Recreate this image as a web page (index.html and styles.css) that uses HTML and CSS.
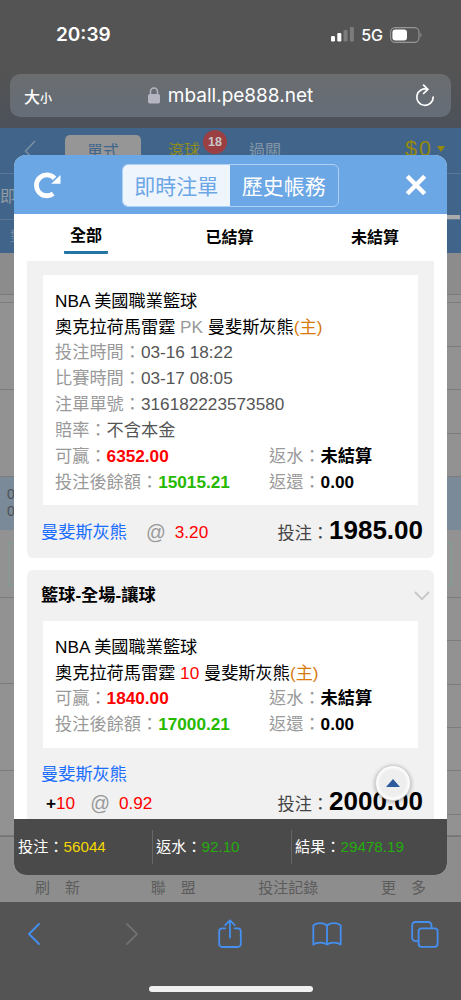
FILE: index.html
```html
<!DOCTYPE html>
<html lang="zh-Hant">
  <head>
    <meta charset="UTF-8" />
    <meta name="viewport" content="width=device-width, initial-scale=1" />
    <title>即時注單</title>
    <link rel="stylesheet" href="styles.css">
  </head>
  <body>
    <div class="phone">
      <header class="browser-top">
        <div class="status">
          <span class="time">20:39</span>
          <div class="status-icons">
            <svg width="23" height="15" viewBox="0 0 23 15">
              <rect x="0" y="9" width="4" height="5.5" rx="1.2" fill="#fff" />
              <rect x="6.3" y="6" width="4" height="8.5" rx="1.2" fill="#fff" />
              <rect x="12.6" y="3" width="4" height="11.5" rx="1.2" fill="#7c7c7c" />
              <rect x="18.9" y="0" width="4" height="14.5" rx="1.2" fill="#7c7c7c" />
            </svg>
            <span class="net">5G</span>
            <svg width="33" height="16" viewBox="0 0 33 16">
              <rect x="0.6" y="0.6" width="28.4" height="14.8" rx="4.6" fill="none" stroke="#979797" stroke-width="1.1" />
              <rect x="2.4" y="2.4" width="14.6" height="11.2" rx="3" fill="#fff" />
              <path d="M30.5 5.5q2 2.5 0 5z" fill="#979797" />
            </svg>
          </div>
        </div>
        <div class="address">
          <span class="size">大<small>小</small></span>
          <div class="url">
            <svg width="12" height="17" viewBox="0 0 12 17">
              <rect x="0" y="7" width="12" height="9.5" rx="1.8" fill="#b4b5c0" />
              <path d="M2.5 8V4.6a3.5 3.5 0 0 1 7 0V8" fill="none" stroke="#b4b5c0" stroke-width="1.5" />
            </svg>
            <span>mball.pe888.net</span>
          </div>
          <svg width="20" height="23" viewBox="0 0 20 23" fill="none" stroke="#fff" stroke-width="1.7" stroke-linecap="round" stroke-linejoin="round">
            <path d="M12.6 5.3A8.2 8.2 0 1 0 18.2 13" />
            <path d="M8.6 1.2l4.2 4.1-4.2 4.2" />
          </svg>
        </div>
      </header>

      <main class="page">
        <nav class="topnav">
          <svg class="back" width="12" height="22" viewBox="0 0 12 22"><path d="M11 1L1.5 11 11 21" fill="none" stroke="#8193a7" stroke-width="1.3" /></svg>
          <span class="nav-active">單式</span>
          <span class="nav-live">滾球<b class="badge">18</b></span>
          <span class="nav-parlay">過關</span>
          <span class="money">$0<i class="caret"></i></span>
        </nav>
        <div class="subnav"><span>即</span></div>
        <div class="filter"><span>對</span><i></i></div>
        <div class="blank"></div>
        <div class="strip"></div>
        <div class="board">
          <div class="side">
            <div class="cell h87"></div>
            <div class="cell h87"></div>
            <div class="cell odds">0<br />0</div>
            <div class="cell h68"><div class="box"></div></div>
            <div class="cell h86"></div>
            <div class="cell h87"></div>
            <div class="cell rest"></div>
          </div>
          <div class="side right">
            <div class="cell h44"></div>
            <div class="cell h43"></div>
            <div class="cell h44"></div>
            <div class="cell h43"></div>
            <div class="cell odds"></div>
            <div class="cell h68"><div class="box"></div></div>
            <div class="cell h43"></div>
            <div class="cell h44"></div>
            <div class="cell h43"></div>
            <div class="cell h43"></div>
            <div class="cell h44"></div>
            <div class="cell rest"></div>
          </div>
        </div>
        <div class="footnav">
          <span>刷　新</span>
          <span class="league">聯　盟</span>
          <span>投注記錄</span>
          <span>更　多</span>
        </div>

        <section class="modal">
          <div class="modal-head">
            <svg class="reload" width="27" height="28" viewBox="0 0 27 28">
              <path d="M20.6 7.4A10.400 10.400 0 1 0 19.200 22.600" fill="none" stroke="#fff" stroke-width="4.800" />
              <path d="M26.500 4V12.800H17.200z" fill="#fff" />
            </svg>
            <div class="switch">
              <span class="on">即時注單</span>
              <span>歷史帳務</span>
            </div>
            <svg width="22" height="22" viewBox="0 0 22 22"><path d="M2.3 2.3l17.4 17.4M19.7 2.3L2.3 19.7" stroke="#fff" stroke-width="4.4" /></svg>
          </div>

          <div class="tabs">
            <span class="tab active">全部</span>
            <span class="tab">已結算</span>
            <span class="tab">未結算</span>
          </div>

          <div class="list">
            <article class="card first">
              <div class="detail">
                <div>NBA 美國職業籃球</div>
                <div>奧克拉荷馬雷霆 <span class="gray">PK</span> 曼斐斯灰熊<span class="host">(主)</span></div>
                <div><label>投注時間：</label><span class="dark">03-16 18:22</span></div>
                <div><label>比賽時間：</label><span class="dark">03-17 08:05</span></div>
                <div><label>注單單號：</label><span class="dark">316182223573580</span></div>
                <div><label>賠率：</label><span class="dark">不含本金</span></div>
                <div class="pair">
                  <span><label>可贏：</label><b class="red">6352.00</b></span>
                  <span><label>返水：</label><b>未結算</b></span>
                </div>
                <div class="pair">
                  <span><label>投注後餘額：</label><b class="green">15015.21</b></span>
                  <span><label>返還：</label><b>0.00</b></span>
                </div>
              </div>
              <div class="bet">
                <span class="team">曼斐斯灰熊</span>
                <span class="at">@</span>
                <span class="red">3.20</span>
                <span class="stake">投注：<b>1985.00</b></span>
              </div>
            </article>

            <article class="card last">
              <div class="card-title">
                <span>籃球-全場-讓球</span>
                <svg width="16" height="10" viewBox="0 0 16 10"><path d="M1 1l7 7.2L15 1" fill="none" stroke="#c8c8c8" stroke-width="1.8" /></svg>
              </div>
              <div class="detail short">
                <div>NBA 美國職業籃球</div>
                <div>奧克拉荷馬雷霆 <span class="red">10</span> 曼斐斯灰熊<span class="host">(主)</span></div>
                <div class="pair">
                  <span><label>可贏：</label><b class="red">1840.00</b></span>
                  <span><label>返水：</label><b>未結算</b></span>
                </div>
                <div class="pair">
                  <span><label>投注後餘額：</label><b class="green">17000.21</b></span>
                  <span><label>返還：</label><b>0.00</b></span>
                </div>
              </div>
              <div class="pick team">曼斐斯灰熊</div>
              <div class="bet second">
                <span class="point"><b>+</b><span class="red">10</span></span>
                <span class="at">@</span>
                <span class="red">0.92</span>
                <span class="stake">投注：<b>2000.00</b></span>
              </div>
            </article>
            <div class="to-top">
              <svg width="14" height="8" viewBox="0 0 14 8"><path d="M0 8L7 0l7 8z" fill="#2c5a9c" /></svg>
            </div>
          </div>

          <div class="summary">
            <span>投注：<em class="yellow">56044</em></span>
            <span>返水：<em>92.10</em></span>
            <span>結果：<em>29478.19</em></span>
          </div>
        </section>
      </main>

      <footer class="browser-bottom">
        <div class="tools">
          <svg width="13" height="22" viewBox="0 0 13 22"><path d="M11.5 1L1.5 11l10 10" /></svg>
          <svg class="off" width="13" height="22" viewBox="0 0 13 22"><path d="M1.5 1l10 10-10 10" /></svg>
          <svg width="24" height="30" viewBox="0 0 24 30">
            <path d="M7.3 9.3H4.2A3 3 0 0 0 1.2 12.3V25a3 3 0 0 0 3 3h15.6a3 3 0 0 0 3-3V12.3a3 3 0 0 0-3-3H16.700" />
            <path d="M12 18.500V1.500M7.200 6.200L12 1.300l4.800 4.900" />
          </svg>
          <svg width="30" height="24" viewBox="0 0 30 24">
            <path d="M15 3.600C12 .5 4.500.3 1.300 3.600V22.500C4.500 20 12 20 15 22.500 18 20 25.500 20 28.700 22.500V3.600C25.500.3 18 .5 15 3.600zM15 3.600V22.500" />
          </svg>
          <svg width="28" height="27" viewBox="0 0 28 27">
            <rect x="7.600" y="7.300" width="19" height="18.500" rx="3" />
            <path d="M7.600 20.200H4.500a3.300 3.300 0 0 1-3.300-3.300V4.300A3.300 3.300 0 0 1 4.500 1h12.700a3.300 3.300 0 0 1 3.300 3.300v3" />
          </svg>
        </div>
        <div class="home-bar"></div>
      </footer>
    </div>
  </body>
</html>
```
FILE: styles.css
```css
* {
  box-sizing: border-box;
}

body {
  margin: 0;
  font-family: "Liberation Sans", "Noto Sans CJK TC", sans-serif;
  background: #545454;
}

svg {
  display: block;
  flex: none;
}

.phone {
  width: 461px;
  height: 1000px;
  overflow: hidden;
  display: flex;
  flex-direction: column;
}

/* browser chrome */
.browser-top {
  height: 128px;
  flex: none;
  background: linear-gradient(#545454 55%, #4c515a);
  color: #fff;
  font-family: Inter, "Noto Sans CJK TC", sans-serif;
}

.status {
  height: 74px;
  padding: 21px 38px 0 56px;
  display: flex;
  justify-content: space-between;
  align-items: flex-start;
}

.time {
  font-size: 19px;
  font-weight: 600;
  line-height: 28px;
}

.status-icons {
  display: flex;
  align-items: center;
  height: 27px;
  gap: 7px;
}

.net {
  font-size: 16px;
  font-weight: 500;
}

.address {
  height: 43px;
  margin: 0 10px;
  padding: 0 16px 0 14px;
  border-radius: 10px;
  background: linear-gradient(#6b6d6f, #656d78);
  display: flex;
  align-items: center;
  justify-content: space-between;
}

.size {
  font-size: 16px;
  font-weight: 500;
}

.size small {
  font-size: 12px;
}

.url {
  display: flex;
  align-items: center;
  gap: 8px;
  font-size: 19px;
  margin-left: -6px;
}

.browser-bottom {
  height: 98px;
  flex: none;
  background: #545454;
  display: flex;
  flex-direction: column;
  align-items: center;
}

.tools {
  width: 100%;
  height: 64px;
  padding: 0 21px 0 19px;
  display: flex;
  align-items: center;
  justify-content: space-between;
}

.tools svg {
  width: 30px;
  fill: none;
  stroke: #458ff0;
  stroke-width: 1.8;
  stroke-linecap: round;
  stroke-linejoin: round;
}

.tools .off {
  stroke: #707070;
}

.home-bar {
  width: 164px;
  height: 6px;
  margin-top: 20px;
  border-radius: 3px;
  background: #f0f0f0;
}

/* dimmed page */
.page {
  position: relative;
  height: 774px;
  flex: none;
  background: #929292;
  display: flex;
  flex-direction: column;
}

.topnav {
  height: 46px;
  flex: none;
  background: #41658a;
  border-bottom: 1px solid #5c7695;
  display: flex;
  align-items: flex-start;
  font-size: 16px;
  color: #8395a8;
}

.back {
  margin: 12px 0 0 24px;
}

.nav-active {
  width: 76px;
  height: 36px;
  margin: 7px 0 0 29px;
  border-radius: 5px;
  background: #969696;
  color: #41658a;
  text-align: center;
  line-height: 33px;
}

.nav-live {
  position: relative;
  margin-left: 27px;
  line-height: 46px;
  color: #8e8b1c;
}

.badge {
  position: absolute;
  left: 35px;
  top: 2px;
  width: 24px;
  height: 24px;
  border-radius: 50%;
  background: #9c3f42;
  color: #c8c8c8;
  font-size: 12.5px;
  line-height: 25px;
  text-align: center;
}

.nav-parlay {
  margin-left: 49px;
  line-height: 46px;
}

.money {
  margin: 0 16px 0 auto;
  font-size: 21.5px;
  line-height: 43px;
  letter-spacing: 2px;
  color: #95880d;
}

.caret {
  display: inline-block;
  margin-left: 4px;
  vertical-align: 4px;
  border: 4.5px solid transparent;
  border-top: 6px solid #95880d;
  border-bottom: 0;
}

.subnav {
  height: 46px;
  flex: none;
  background: #41658a;
  border-bottom: 1px solid #5c7695;
  color: #929ba5;
  font-size: 16px;
  line-height: 46px;
}

.filter {
  height: 33px;
  flex: none;
  background: #41658a;
  color: #71879f;
  display: flex;
  justify-content: space-between;
  font-size: 14px;
  line-height: 32px;
  padding: 0 1px 0 10px;
}

.filter i {
  width: 100px;
  height: 4px;
  margin-top: -5px;
  background: #aaa;
}

.blank {
  height: 42px;
  flex: none;
  background: #8c8c8c;
  border-bottom: 1px solid #7a7a7a;
}

.strip {
  height: 8px;
  flex: none;
  border-bottom: 1px solid #7d7d7d;
}

.board {
  flex: 1;
  min-height: 0;
  display: flex;
  justify-content: space-between;
}

.side {
  width: 50%;
  display: flex;
  flex-direction: column;
}

.cell {
  flex: none;
  border-bottom: 1px solid #7c7c7c;
}

.h43 { height: 43px; }
.h44 { height: 44px; }
.h68 { height: 68px; padding-top: 12px; }
.h86 { height: 86px; }
.h87 { height: 87px; }

.odds {
  height: 53px;
  border: 0;
  background: #7b8a99;
  color: #4b4f53;
  font-size: 14px;
  line-height: 17px;
  padding: 9px 0 0 7px;
}

.rest {
  flex: 1;
}

.box {
  height: 44px;
  margin-left: 9px;
  border: 1px solid #7da092;
}

.right .box {
  margin: 0 9px 0 0;
}

.footnav {
  height: 66px;
  flex: none;
  background: #8d8d8d;
  border-top: 1px solid #747474;
  padding: 40px 35px 0 35px;
  display: flex;
  justify-content: space-between;
  font-size: 15px;
  line-height: 22px;
  color: #5c5c5c;
}

.league {
  margin-left: 8px;
}

/* bet records */
.modal {
  position: absolute;
  left: 14px;
  top: 27px;
  width: 433px;
  height: 720px;
  border-radius: 12px;
  overflow: hidden;
  background: #fff;
  display: flex;
  flex-direction: column;
}

.modal-head {
  height: 59px;
  flex: none;
  padding: 0 20px;
  background: #6ba6e5;
  display: flex;
  align-items: center;
  justify-content: space-between;
}

.switch {
  width: 217px;
  height: 43px;
  margin: 2px 0 0 -6px;
  border: 1px solid #b0d0f5;
  border-radius: 6px;
  overflow: hidden;
  display: flex;
  font-size: 21px;
  line-height: 43px;
  color: #fff;
}

.switch span {
  flex: 1;
  text-align: center;
}

.switch .on {
  background: #eff5fd;
  color: #6ba6e5;
}

.tabs {
  height: 47px;
  flex: none;
  padding: 0 48px 0 50px;
  display: flex;
  justify-content: space-between;
  font-size: 16px;
  font-weight: 600;
  line-height: 48px;
}

.tab.active {
  width: 44px;
  height: 40px;
  line-height: 44px;
  border-bottom: 3px solid #2375a4;
  border-radius: 1px;
  text-align: center;
}

.list {
  position: relative;
  height: 558px;
  flex: none;
  overflow: hidden;
  padding: 0 13px;
  font-size: 17.2px;
  line-height: 25.85px;
}

.card {
  margin-bottom: 12px;
  padding: 0 16px;
  border-radius: 6px;
  background: #f1f1f1;
}

.card.first {
  height: 297px;
  padding-top: 14px;
  border-radius: 0 0 6px 6px;
}

.card.last {
  padding-bottom: 16px;
}

.detail {
  height: 230px;
  padding: 13.7px 12px 0;
  background: #fff;
  white-space: nowrap;
}

.detail.short {
  height: 127px;
}

.detail > div {
  height: 25.85px;
}

.detail label {
  color: #999;
}

.pair {
  display: grid;
  grid-template-columns: 214px 1fr;
}

.gray {
  color: #999;
}

.dark {
  color: #555;
}

.host {
  color: #d57a0b;
}

.red {
  color: #f00;
}

.green {
  color: #25b900;
}

.team {
  color: #1a6dff;
}

.bet {
  height: 55px;
  margin: 0 -5px 0 -2px;
  display: flex;
  align-items: center;
}

.at {
  margin: 0 9px 0 19px;
  color: #999;
  font-size: 19.5px;
}

.stake {
  margin-left: auto;
  color: #444;
}

.stake b {
  color: #000;
  font-size: 26px;
}

.card-title {
  height: 51px;
  margin: 0 -12px 0 -2px;
  display: flex;
  align-items: center;
  justify-content: space-between;
  font-weight: bold;
}

.pick {
  margin: 14px 0 0 -2px;
}

.bet.second {
  height: 32px;
}

.point {
  margin-left: 5px;
}

.point + .at {
  margin-left: 15px;
}

.to-top {
  position: absolute;
  left: 361px;
  top: 504px;
  width: 36px;
  height: 36px;
  border-radius: 50%;
  border: 1px solid #d2d2d2;
  background: #eee;
  box-shadow: 0 1px 4px rgba(0, 0, 0, 0.3), inset 0 0 3px 2px #fff;
  display: flex;
  align-items: center;
  justify-content: center;
}

.summary {
  height: 56px;
  flex: none;
  background: #4a4a4a;
  color: #fff;
  display: grid;
  grid-template-columns: 138px 139px 1fr;
  align-items: center;
  font-size: 15.2px;
}

.summary span {
  height: 34px;
  line-height: 34px;
  padding-left: 4px;
}

.summary span + span {
  border-left: 1px solid #666;
  padding-left: 3px;
}

.summary em {
  font-style: normal;
  color: #24ad0b;
}

.summary .yellow {
  color: #f5d800;
}
```
